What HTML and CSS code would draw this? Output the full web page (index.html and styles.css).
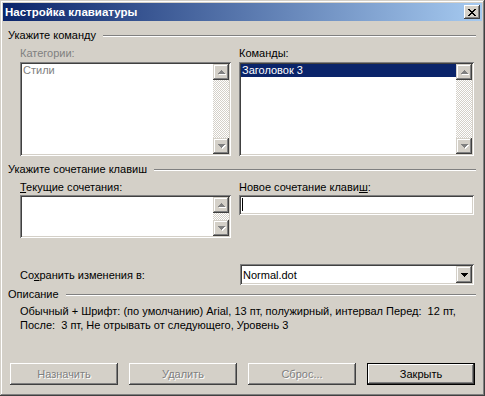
FILE: index.html
```html
<!DOCTYPE html>
<html>
<head>
  <title>Настройка клавиатуры</title>
  <link rel="stylesheet" href="styles.css">
</head>
<body>

<div class="window">
  <div class="titlebar">
    <span class="title">Настройка клавиатуры</span>
    <button class="close-btn" title="Закрыть">
      <svg width="8" height="7" viewBox="0 0 8 7" shape-rendering="crispEdges">
        <path d="M0 0h2v1H0zM6 0h2v1H6zM1 1h2v1H1zM5 1h2v1H5zM2 2h4v1H2zM3 3h2v1H3zM2 4h4v1H2zM1 5h2v1H1zM5 5h2v1H5zM0 6h2v1H0zM6 6h2v1H6z" fill="#000"/>
      </svg>
    </button>
  </div>

  <div class="content">
    <div class="group-head"><span>Укажите команду</span></div>

    <div class="row labels">
      <div class="col-left label disabled">Категории:</div>
      <div class="col-right label">Коман<u>д</u>ы:</div>
    </div>

    <div class="row">
      <div class="col-left listbox tall">
        <div class="items">
          <div class="item disabled">Стили</div>
        </div>
        <div class="scrollbar">
          <div class="sb-btn"><svg width="7" height="4" viewBox="0 0 7 4" shape-rendering="crispEdges"><path d="M3 0h1v1H3zM2 1h3v1H2zM1 2h5v1H1zM0 3h7v1H0z"/></svg></div>
          <div class="sb-track"></div>
          <div class="sb-btn"><svg width="7" height="4" viewBox="0 0 7 4" shape-rendering="crispEdges"><path d="M0 0h7v1H0zM1 1h5v1H1zM2 2h3v1H2zM3 3h1v1H3z"/></svg></div>
        </div>
      </div>
      <div class="col-right listbox tall">
        <div class="items">
          <div class="item selected">Заголовок 3</div>
        </div>
        <div class="scrollbar">
          <div class="sb-btn"><svg width="7" height="4" viewBox="0 0 7 4" shape-rendering="crispEdges"><path d="M3 0h1v1H3zM2 1h3v1H2zM1 2h5v1H1zM0 3h7v1H0z"/></svg></div>
          <div class="sb-track"></div>
          <div class="sb-btn"><svg width="7" height="4" viewBox="0 0 7 4" shape-rendering="crispEdges"><path d="M0 0h7v1H0zM1 1h5v1H1zM2 2h3v1H2zM3 3h1v1H3z"/></svg></div>
        </div>
      </div>
    </div>

    <div class="group-head second"><span>Укажите сочетание клавиш</span></div>

    <div class="row labels">
      <div class="col-left label"><u>Т</u>екущие сочетания:</div>
      <div class="col-right label">Новое сочетание клави<u>ш</u>:</div>
    </div>

    <div class="row top">
      <div class="col-left listbox short">
        <div class="items"></div>
        <div class="scrollbar">
          <div class="sb-btn"><svg width="7" height="4" viewBox="0 0 7 4" shape-rendering="crispEdges"><path d="M3 0h1v1H3zM2 1h3v1H2zM1 2h5v1H1zM0 3h7v1H0z"/></svg></div>
          <div class="sb-track"></div>
          <div class="sb-btn"><svg width="7" height="4" viewBox="0 0 7 4" shape-rendering="crispEdges"><path d="M0 0h7v1H0zM1 1h5v1H1zM2 2h3v1H2zM3 3h1v1H3z"/></svg></div>
        </div>
      </div>
      <div class="col-right textbox"><span class="caret"></span></div>
    </div>

    <div class="row save-row">
      <div class="save-label">Со<u>х</u>ранить изменения в:</div>
      <div class="combo">
        <span class="combo-value">Normal.dot</span>
        <div class="combo-btn"><svg width="7" height="4" viewBox="0 0 7 4" shape-rendering="crispEdges"><path d="M0 0h7v1H0zM1 1h5v1H1zM2 2h3v1H2zM3 3h1v1H3z" fill="#000"/></svg></div>
      </div>
    </div>

    <div class="group-head third"><span>Описание</span></div>

    <div class="description">
      Обычный + Шрифт: (по умолчанию) Arial, 13 пт, полужирный, интервал Перед:&nbsp; 12 пт,<br>
      После:&nbsp; 3 пт, Не отрывать от следующего, Уровень 3
    </div>

    <div class="buttons">
      <button class="btn" disabled>Назначить</button>
      <button class="btn" disabled>Удалить</button>
      <button class="btn" disabled>Сброс...</button>
      <button class="btn default">Закрыть</button>
    </div>
  </div>
</div>

</body>
</html>
```

FILE: styles.css
```css
body {
  margin: 0;
  background: #d4d0c8;
}

.window {
  width: 485px;
  height: 396px;
  box-sizing: border-box;
  padding: 3px;
  background: #d4d0c8;
  box-shadow: inset -1px -1px #404040, inset 1px 1px #d4d0c8, inset -2px -2px #808080, inset 2px 2px #fff;
  display: flex;
  flex-direction: column;
  font-family: 'Liberation Sans', Arial, sans-serif;
  font-size: 11px;
  color: #000;
}

.titlebar {
  height: 18px;
  flex-shrink: 0;
  display: flex;
  align-items: center;
  justify-content: space-between;
  padding: 0 2px 0 2px;
  background: linear-gradient(to right, #0a246a, #a6caf0);
}

.title {
  color: white;
  font-weight: bold;
  font-size: 11.5px;
}

.close-btn {
  width: 16px;
  height: 14px;
  padding: 0;
  border: none;
  background: #d4d0c8;
  box-shadow: inset -1px -1px #404040, inset 1px 1px #fff, inset -2px -2px #808080, inset 2px 2px #d4d0c8;
  display: flex;
  align-items: center;
  justify-content: center;
}

.content {
  flex: 1;
  display: flex;
  flex-direction: column;
  padding: 8px 8px 8px 5px;
}

.group-head {
  display: flex;
  align-items: center;
  gap: 7px;
  height: 13px;
  line-height: 13px;
  margin-right: -2px;
}

.group-head::after {
  content: "";
  flex: 1;
  height: 0;
  border-top: 1px solid #808080;
  border-bottom: 1px solid #fff;
}

.group-head.second {
  margin-top: 7px;
}

.group-head.third {
  margin-top: 3px;
}

.row {
  display: flex;
  gap: 8px;
  margin-left: 12px;
}

.row.top {
  align-items: flex-start;
}

.row.labels {
  margin-top: 5px;
  height: 13px;
  line-height: 13px;
  margin-bottom: 1px;
}

.col-left {
  width: 211px;
  flex-shrink: 0;
}

.col-right {
  width: 235px;
  flex-shrink: 0;
}

.label.disabled {
  color: #808080;
}

.listbox {
  box-sizing: border-box;
  display: flex;
  padding: 2px;
  background: #fff;
  box-shadow: inset 1px 1px #808080, inset -1px -1px #fff, inset 2px 2px #404040, inset -2px -2px #d4d0c8;
}

.listbox.tall {
  height: 94px;
  margin-top: 1px;
}

.listbox.short {
  height: 43px;
}

.items {
  flex: 1;
}

.item {
  height: 13px;
  line-height: 13px;
  padding-left: 1px;
}

.item.disabled {
  color: #808080;
}

.item.selected {
  background: #0a246a;
  color: #fff;
}

.scrollbar {
  width: 16px;
  display: flex;
  flex-direction: column;
}

.sb-btn {
  width: 16px;
  height: 16px;
  flex-shrink: 0;
  box-sizing: border-box;
  background: #d4d0c8;
  box-shadow: inset -1px -1px #404040, inset 1px 1px #d4d0c8, inset -2px -2px #808080, inset 2px 2px #fff;
  display: flex;
  align-items: center;
  justify-content: center;
}

.sb-btn svg {
  fill: #808080;
  filter: drop-shadow(1px 1px 0 #fff);
}

.sb-track {
  flex: 1;
  background: repeating-conic-gradient(#d4d0c8 0 25%, #fff 0 50%) 0 0 / 2px 2px;
}

.textbox {
  box-sizing: border-box;
  height: 20px;
  padding: 3px 0 0 3px;
  background: #fff;
  box-shadow: inset 1px 1px #808080, inset -1px -1px #fff, inset 2px 2px #404040, inset -2px -2px #d4d0c8;
}

.caret {
  display: block;
  width: 1px;
  height: 13px;
  background: #000;
}

.save-row {
  margin-top: 26px;
  align-items: center;
  gap: 0;
}

.save-label {
  width: 220px;
  flex-shrink: 0;
}

.combo {
  box-sizing: border-box;
  width: 235px;
  height: 21px;
  padding: 2px;
  display: flex;
  align-items: center;
  background: #fff;
  box-shadow: inset 1px 1px #808080, inset -1px -1px #fff, inset 2px 2px #404040, inset -2px -2px #d4d0c8;
}

.combo-value {
  flex: 1;
  padding-left: 1px;
}

.combo-btn {
  width: 16px;
  height: 17px;
  box-sizing: border-box;
  background: #d4d0c8;
  box-shadow: inset -1px -1px #404040, inset 1px 1px #d4d0c8, inset -2px -2px #808080, inset 2px 2px #fff;
  display: flex;
  align-items: center;
  justify-content: center;
}

.description {
  margin: 3px 0 0 12px;
  line-height: 14px;
}

.buttons {
  margin: auto -1px 0 2px;
  display: flex;
  justify-content: space-between;
}

.btn {
  width: 108px;
  height: 22px;
  padding: 0;
  border: none;
  background: #d4d0c8;
  box-shadow: inset -1px -1px #404040, inset 1px 1px #fff, inset -2px -2px #808080, inset 2px 2px #d4d0c8;
  font-family: 'Liberation Sans', Arial, sans-serif;
  font-size: 11px;
  color: #000;
}

.btn:disabled {
  color: #808080;
  text-shadow: 1px 1px 0 #fff;
}

.btn.default {
  border: 1px solid #000;
}
```
